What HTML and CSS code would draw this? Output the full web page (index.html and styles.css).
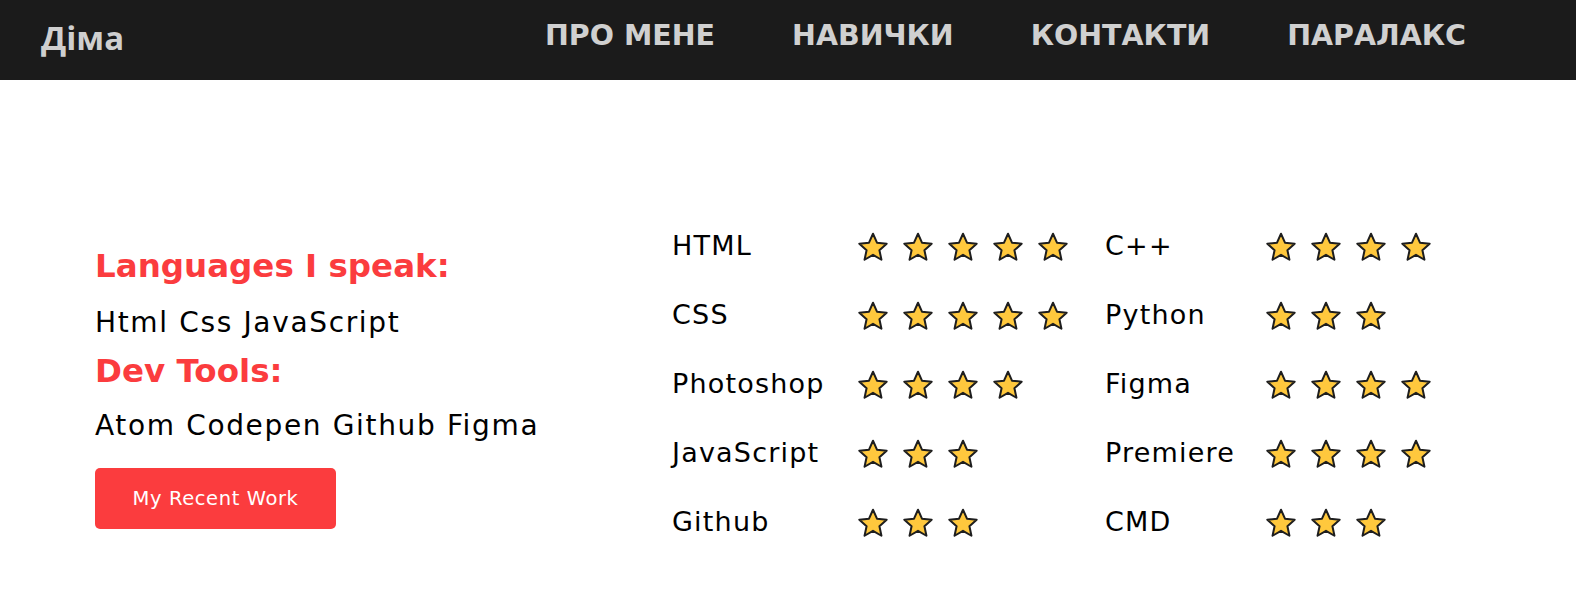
FILE: index.html
```html
<!DOCTYPE html>
<html lang="uk">
<head>
<meta charset="utf-8">
<title>Діма</title>
<link rel="stylesheet" href="styles.css">
</head>
<body>
<svg class="defs" width="0" height="0" aria-hidden="true">
  <symbol id="star" viewBox="0 0 24 24">
    <polygon points="12,1.4 15.18,8.53 22.94,9.35 17.14,14.57 18.76,22.2 12,18.3 5.24,22.2 6.86,14.57 1.06,9.35 8.82,8.53" fill="#ffc83d" stroke="#1e1e1e" stroke-width="1.6" stroke-linejoin="round"/>
  </symbol>
</svg>
<header class="header">
  <div class="logo">Діма</div>
  <nav class="nav">
    <a href="#" class="nav-link">ПРО МЕНЕ</a>
    <a href="#" class="nav-link">НАВИЧКИ</a>
    <a href="#" class="nav-link">КОНТАКТИ</a>
    <a href="#" class="nav-link">ПАРАЛАКС</a>
  </nav>
</header>
<main class="main">
  <section class="intro">
    <h2 class="intro-title">Languages I speak:</h2>
    <p class="intro-text">Html Css JavaScript</p>
    <h2 class="intro-title intro-title--second">Dev Tools:</h2>
    <p class="intro-text intro-text--second">Atom Codepen Github Figma</p>
    <a href="#" class="btn">My Recent Work</a>
  </section>
  <section class="skills">
    <div class="skill-name">HTML</div>
    <div class="stars"><svg class="star"><use href="#star"/></svg><svg class="star"><use href="#star"/></svg><svg class="star"><use href="#star"/></svg><svg class="star"><use href="#star"/></svg><svg class="star"><use href="#star"/></svg></div>
    <div class="skill-name">C++</div>
    <div class="stars"><svg class="star"><use href="#star"/></svg><svg class="star"><use href="#star"/></svg><svg class="star"><use href="#star"/></svg><svg class="star"><use href="#star"/></svg></div>

    <div class="skill-name">CSS</div>
    <div class="stars"><svg class="star"><use href="#star"/></svg><svg class="star"><use href="#star"/></svg><svg class="star"><use href="#star"/></svg><svg class="star"><use href="#star"/></svg><svg class="star"><use href="#star"/></svg></div>
    <div class="skill-name">Python</div>
    <div class="stars"><svg class="star"><use href="#star"/></svg><svg class="star"><use href="#star"/></svg><svg class="star"><use href="#star"/></svg></div>

    <div class="skill-name">Photoshop</div>
    <div class="stars"><svg class="star"><use href="#star"/></svg><svg class="star"><use href="#star"/></svg><svg class="star"><use href="#star"/></svg><svg class="star"><use href="#star"/></svg></div>
    <div class="skill-name">Figma</div>
    <div class="stars"><svg class="star"><use href="#star"/></svg><svg class="star"><use href="#star"/></svg><svg class="star"><use href="#star"/></svg><svg class="star"><use href="#star"/></svg></div>

    <div class="skill-name">JavaScript</div>
    <div class="stars"><svg class="star"><use href="#star"/></svg><svg class="star"><use href="#star"/></svg><svg class="star"><use href="#star"/></svg></div>
    <div class="skill-name">Premiere</div>
    <div class="stars"><svg class="star"><use href="#star"/></svg><svg class="star"><use href="#star"/></svg><svg class="star"><use href="#star"/></svg><svg class="star"><use href="#star"/></svg></div>

    <div class="skill-name">Github</div>
    <div class="stars"><svg class="star"><use href="#star"/></svg><svg class="star"><use href="#star"/></svg><svg class="star"><use href="#star"/></svg></div>
    <div class="skill-name">CMD</div>
    <div class="stars"><svg class="star"><use href="#star"/></svg><svg class="star"><use href="#star"/></svg><svg class="star"><use href="#star"/></svg></div>
  </section>
</main>
</body>
</html>
```
FILE: styles.css
```css
html, body {
  margin: 0;
  padding: 0;
  background: #fff;
}
body {
  font-family: "DejaVu Sans", sans-serif;
  color: #000;
}
.defs {
  position: absolute;
  width: 0;
  height: 0;
  overflow: hidden;
}
.header {
  height: 80px;
  background: #1b1b1b;
  display: flex;
  align-items: center;
  padding: 0 110px 0 41px;
  box-sizing: border-box;
}
.logo {
  font-family: "Open Sans", sans-serif;
  font-weight: 700;
  font-size: 33px;
  color: #cfcfcf;
  line-height: 1;
  margin-top: -5px;
}
.nav {
  margin-left: auto;
  display: flex;
  gap: 77px;
  margin-top: -7px;
}
.nav-link {
  font-family: "DejaVu Sans", sans-serif;
  font-weight: 700;
  font-size: 28.5px;
  color: #d0d0d0;
  text-decoration: none;
  line-height: 1;
}
.main {
  display: flex;
  align-items: flex-start;
  padding: 132px 0 0 95px;
}
.intro {
  flex: 0 0 577px;
  margin-top: 34px;
  display: flex;
  flex-direction: column;
  align-items: flex-start;
}
.intro-title {
  margin: 0;
  font-size: 32.5px;
  line-height: 40px;
  font-weight: 700;
  color: #fb3c3e;
}
.intro-title--second {
  margin-top: 8px;
}
.intro-text {
  margin: 17px 0 0;
  font-size: 28px;
  line-height: 40px;
  letter-spacing: 1.65px;
}
.intro-text--second {
  margin-top: 15px;
}
.btn {
  margin-top: 22px;
  width: 241px;
  height: 61px;
  border-radius: 5px;
  background: #fb3c3e;
  color: #fff;
  text-decoration: none;
  font-size: 19.5px;
  letter-spacing: 0.6px;
  display: flex;
  align-items: center;
  justify-content: center;
}
.skills {
  display: grid;
  grid-template-columns: 186px 247px 161px auto;
  grid-auto-rows: 69px;
  align-items: center;
}
.skill-name {
  font-size: 27px;
  letter-spacing: 1.2px;
  line-height: 1;
  margin-top: -3px;
}
.stars {
  display: flex;
  gap: 15px;
}
.star {
  width: 30px;
  height: 30px;
  display: block;
}
```
